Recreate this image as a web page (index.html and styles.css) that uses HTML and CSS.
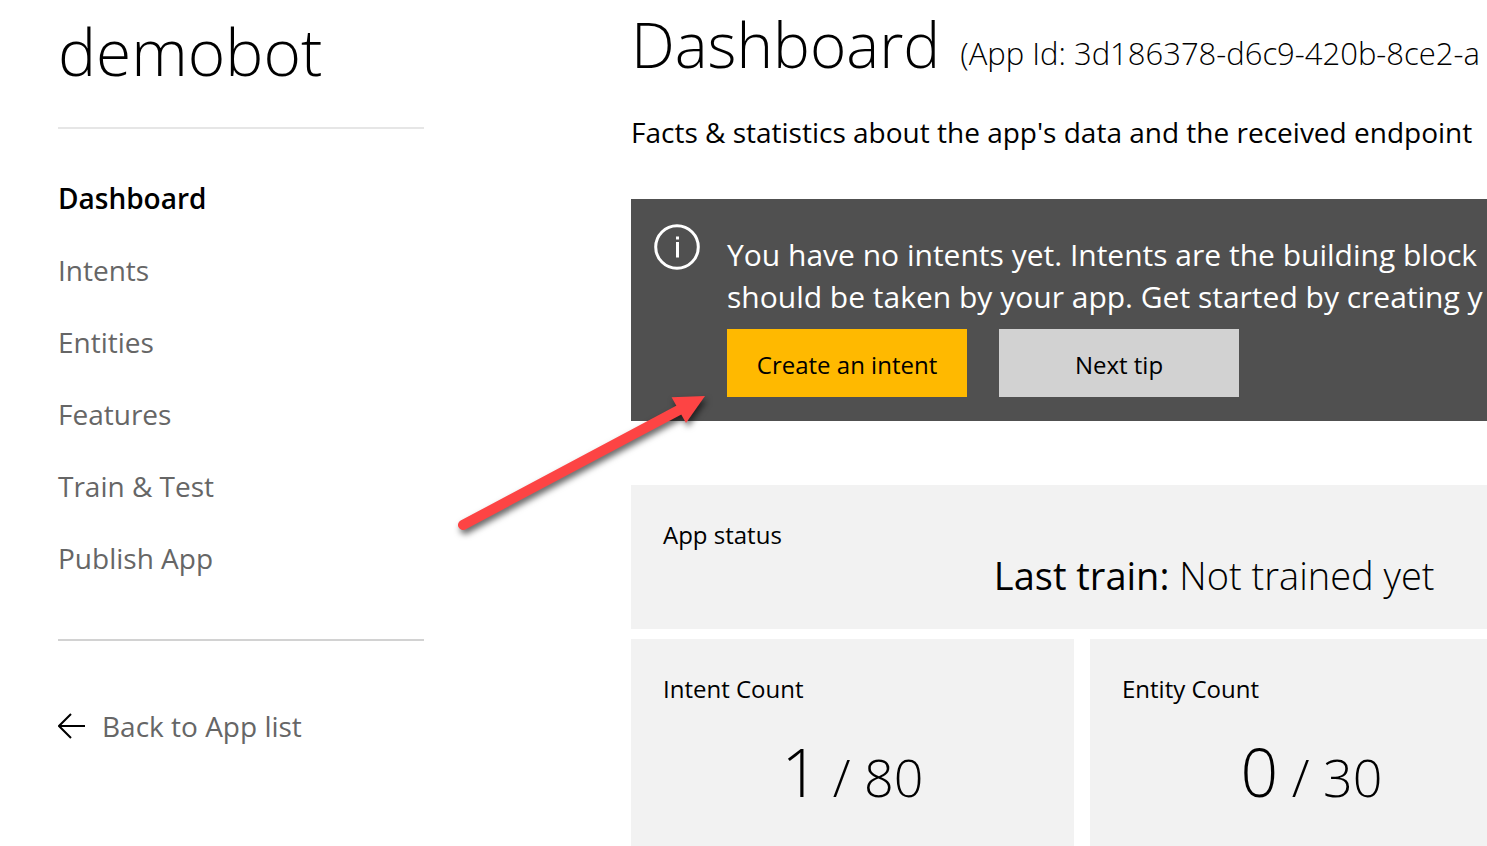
FILE: index.html
```html
<!DOCTYPE html>
<html lang="en">
<head>
<meta charset="utf-8">
<title>demobot - Dashboard</title>
<meta name="viewport" content="width=device-width, initial-scale=1">
<link rel="stylesheet" href="styles.css">
</head>
<body>
<div class="page">
  <aside class="sidebar">
    <h2 class="app-name">demobot</h2>
    <nav class="nav" aria-label="App">
      <a class="nav-link nav-link-active" href="#dashboard" aria-current="page">Dashboard</a>
      <a class="nav-link" href="#intents">Intents</a>
      <a class="nav-link" href="#entities">Entities</a>
      <a class="nav-link" href="#features">Features</a>
      <a class="nav-link" href="#train">Train &amp; Test</a>
      <a class="nav-link" href="#publish">Publish App</a>
    </nav>
    <a class="back" href="#apps">
      <svg class="back-icon" viewBox="0 0 28 26" aria-hidden="true"><path d="M13 1L1 13L13 25M1 13H27"/></svg>
      <span>Back to App list</span>
    </a>
  </aside>
  <main class="main" id="dashboard">
    <header class="heading">
      <h1 class="title">Dashboard</h1>
      <span class="app-id">(App Id: 3d186378-d6c9-420b-8ce2-a</span>
    </header>
    <p class="intro">Facts &amp; statistics about the app's data and the received endpoint</p>
    <section class="tip">
      <svg class="tip-icon" viewBox="0 0 46 46" aria-hidden="true"><circle cx="23" cy="23" r="21.300"/><path d="M23.500 18V33.500M23.500 12.500V15.500"/></svg>
      <div class="tip-body">
        <p class="tip-text">You have no intents yet. Intents are the building block<br>should be taken by your app. Get started by creating y</p>
        <div class="tip-actions">
          <button class="button button-primary" type="button">Create an intent</button>
          <button class="button" type="button">Next tip</button>
        </div>
      </div>
    </section>
    <section class="cards">
      <article class="card card-status">
        <h3 class="card-title">App status</h3>
        <p class="status"><span class="status-label">Last train:</span> Not trained yet</p>
      </article>
      <article class="card">
        <h3 class="card-title">Intent Count</h3>
        <p class="count"><span class="count-value">1</span> / 80</p>
      </article>
      <article class="card">
        <h3 class="card-title">Entity Count</h3>
        <p class="count"><span class="count-value">0</span> / 30</p>
      </article>
    </section>
  </main>
</div>
<svg class="pointer" viewBox="0 0 264 154" aria-hidden="true">
  <path class="pointer-shaft" d="M9 145L225 30"/>
  <path d="M217.600 17.300L251 16L232 43Z"/>
</svg>
</body>
</html>
```
FILE: styles.css
```css
* {
  box-sizing: border-box;
}

body {
  margin: 0;
  overflow: hidden;
  background: #fff;
  color: #000;
  font-family: "Segoe UI", "Open Sans", "Noto Sans", sans-serif;
  font-size: 28px;
  line-height: 40px;
}

h1, h2, h3, p {
  margin: 0;
  font-weight: 400;
}

a {
  color: inherit;
  text-decoration: none;
}

.page {
  display: grid;
  grid-template-columns: 366px minmax(0, 1fr);
  column-gap: 207px;
  min-height: 100vh;
  padding-left: 58px;
}

.app-name {
  padding: 8px 0 31px;
  border-bottom: 2px solid #e6e6e6;
  font-size: 64px;
  font-weight: 300;
  line-height: 88px;
}

.nav {
  display: flex;
  flex-direction: column;
  gap: 32px;
  padding: 49px 0 61px;
  border-bottom: 2px solid #d2d2d2;
}

.nav-link,
.back {
  color: #666;
}

.nav-link-active {
  color: #000;
  font-weight: 600;
}

.back {
  display: flex;
  align-items: center;
  gap: 16px;
  margin-top: 65px;
}

.back-icon {
  width: 28px;
  height: 26px;
  fill: none;
  stroke: #000;
  stroke-width: 2;
}

.main {
  overflow: hidden;
  white-space: nowrap;
}

.heading {
  display: flex;
  align-items: flex-end;
  gap: 20px;
}

.title {
  font-size: 62px;
  font-weight: 300;
  line-height: 88px;
}

.app-id {
  font-size: 31px;
  font-weight: 300;
  line-height: 70px;
}

.intro {
  padding: 24px 0 47px;
}

.tip {
  display: flex;
  gap: 27px;
  padding: 25px 24px 24px 23px;
  background: #505050;
  color: #fff;
}

.tip-icon {
  flex: none;
  width: 46px;
  height: 46px;
  fill: none;
  stroke: #fff;
  stroke-width: 3;
}

.tip-text {
  padding: 10px 0 11px;
  font-size: 30px;
  line-height: 42px;
}

.tip-actions {
  display: flex;
  gap: 32px;
}

.button {
  width: 240px;
  height: 68px;
  padding: 4px 0 0;
  border: 0;
  background: #d2d2d2;
  color: #000;
  font: inherit;
  font-size: 24px;
}

.button-primary {
  background: #ffb900;
}

.cards {
  display: grid;
  grid-template-columns: repeat(2, 443px);
  gap: 10px 16px;
  margin-top: 64px;
}

.card {
  min-height: 207px;
  padding: 32px 32px 28px;
  background: #f2f2f2;
}

.card-title {
  font-size: 24px;
  line-height: 36px;
}

.card-status {
  grid-column: 1 / -1;
  display: flex;
  gap: 212px;
  min-height: 144px;
}

.status {
  padding-top: 32px;
  font-size: 38px;
  font-weight: 300;
  line-height: 52px;
}

.status-label {
  font-weight: 400;
}

.count {
  padding-top: 20px;
  font-size: 52px;
  font-weight: 300;
  line-height: 88px;
  text-align: center;
}

.count-value {
  font-size: 66px;
}

.pointer {
  position: absolute;
  left: 454px;
  top: 380px;
  width: 264px;
  height: 154px;
  overflow: visible;
  fill: #fd4444;
  filter: drop-shadow(2px 4px 3px rgba(0, 0, 0, 0.6));
  pointer-events: none;
}

.pointer-shaft {
  stroke: #fd4444;
  stroke-width: 10;
  stroke-linecap: round;
}
```
